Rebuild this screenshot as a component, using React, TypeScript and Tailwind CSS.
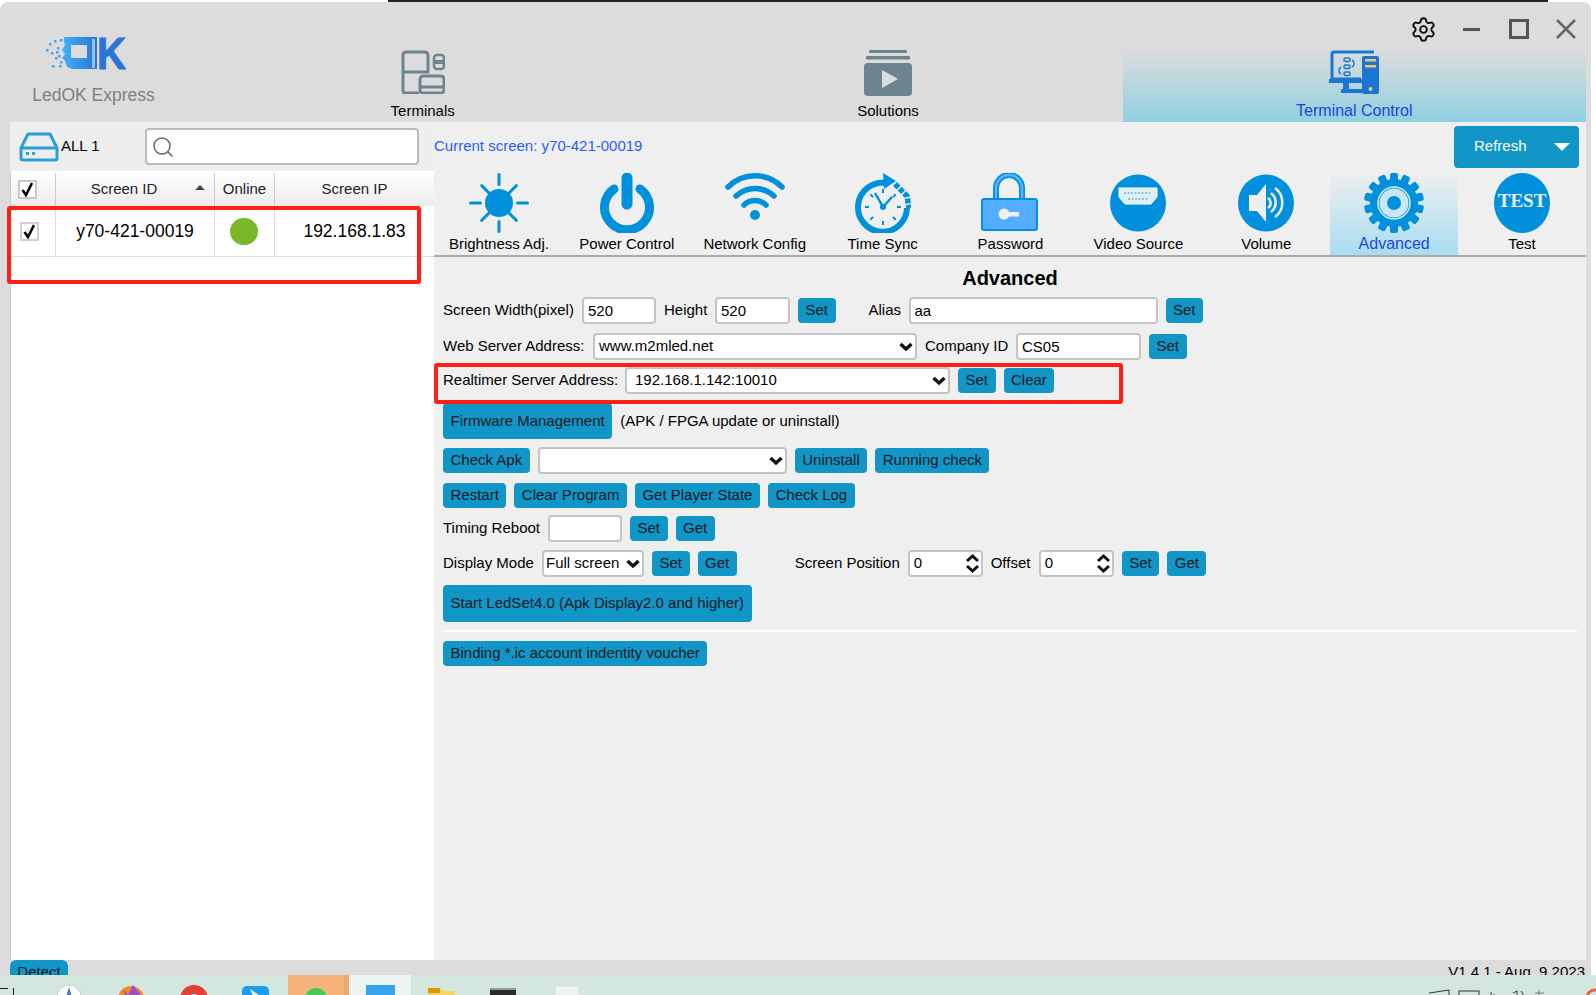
import { Search, Settings } from "lucide-react";
import type { ReactNode } from "react";

const ICON = "#0090dc";
const SLATE = "#6d8490";

function Btn({ children, tall }: { children: ReactNode; tall?: boolean }) {
  return (
    <button
      className={`shrink-0 whitespace-nowrap rounded-[4px] bg-[#1296c8] px-[7.5px] text-[15px] text-[#101820] ${
        tall ? "h-full" : "h-[25px]"
      }`}
    >
      {children}
    </button>
  );
}

function Field({ value, className }: { value: string; className: string }) {
  return (
    <input
      readOnly
      value={value}
      className={`h-[27px] shrink-0 rounded-[4px] border-2 border-[#c4c4c4] bg-white pl-[4px] text-[15px] text-black ${className}`}
    />
  );
}

function Picker({ value, className, inner }: { value: string; className: string; inner: string }) {
  return (
    <div className={`relative h-[27px] shrink-0 ${className}`}>
      <select
        defaultValue={value}
        className={`h-full w-full appearance-none rounded-[4px] border-2 border-[#c4c4c4] bg-white text-[15px] text-black ${inner}`}
      >
        <option value={value}>{value}</option>
      </select>
      <svg width="14" height="10" viewBox="0 0 14 10" fill="none" stroke="#111" strokeWidth="3.400" className="pointer-events-none absolute right-[4px] top-[9px]">
        <path d="M1.500 2l5.500 5 5.500-5" />
      </svg>
    </div>
  );
}

function Spinner() {
  return (
    <div className="flex h-[27px] w-[75px] shrink-0 items-center justify-between rounded-[4px] border-2 border-[#c4c4c4] bg-white pl-[4px] pr-[1px] text-[15px] text-black">
      <span>0</span>
      <svg width="15" height="21" viewBox="0 0 15 21" fill="none" stroke="#111" strokeWidth="3">
        <path d="M2 8l5.500-5 5.500 5M2 13l5.500 5 5.500-5" />
      </svg>
    </div>
  );
}

function Check({ className }: { className: string }) {
  return (
    <div className={`flex h-[19px] w-[19px] items-center justify-center border-2 border-[#c8c8c8] bg-white ${className}`}>
      <svg width="13" height="15" viewBox="0 0 13 15" fill="none" stroke="#000" strokeWidth="2.600">
        <path d="M1.500 8l3.500 5L11 1" />
      </svg>
    </div>
  );
}

function SunIcon() {
  const rays = [0, 45, 90, 135, 180, 225, 270, 315];
  return (
    <svg width="60" height="60" viewBox="0 0 60 60">
      <circle cx="30" cy="30" r="14" fill={ICON} />
      {rays.map((r) => (
        <rect key={r} x="28.500" y="0" width="3" height="13" rx="1.500" fill={ICON} transform={`rotate(${r} 30 30) ${r % 90 ? "translate(0 4)" : ""}`} />
      ))}
    </svg>
  );
}

function PowerIcon() {
  return (
    <svg width="56" height="60" viewBox="0 0 56 60" fill="none" stroke={ICON}>
      <path d="M15 16a22.500 22.500 0 1 0 26 0" strokeWidth="9" strokeLinecap="round" />
      <path d="M28 5v26" strokeWidth="11" strokeLinecap="round" />
    </svg>
  );
}

function WifiIcon() {
  return (
    <svg width="60" height="60" viewBox="0 4 60 60" fill="none" stroke={ICON} strokeWidth="5.500" strokeLinecap="round">
      <path d="M3 18c15-15 39-15 54 0" />
      <path d="M11 27c11-10 27-10 38 0" />
      <path d="M19 36c6-6 16-6 22 0" />
      <circle cx="30" cy="46" r="5" fill={ICON} stroke="none" />
    </svg>
  );
}

function ClockIcon() {
  const ticks = [0, 45, 90, 135, 180, 225, 270, 315];
  return (
    <svg width="56" height="60" viewBox="0 0 56 60" fill="none" stroke={ICON}>
      <path d="M31 10A24.500 24.500 0 1 0 52 35" strokeWidth="6" />
      <path d="M28 0l13 8-12 8z" fill={ICON} stroke="none" />
      <path d="M40 11l12 12 2 12" strokeWidth="5.500" strokeDasharray="5 1.500" />
      {ticks.map((t) => (
        <path key={t} d="M28 16v4" strokeWidth="2" transform={`rotate(${t} 28 34)`} />
      ))}
      <path d="M20 20l8 14 9-10" strokeWidth="2.500" />
      <circle cx="28" cy="34" r="3" fill={ICON} stroke="none" />
    </svg>
  );
}

function LockIcon() {
  return (
    <svg width="60" height="60" viewBox="0 0 60 60" fill="none">
      <path d="M16 28V15a13 13 0 0 1 26 0v13" stroke={ICON} strokeWidth="6" />
      <path d="M16 28V15a13 13 0 0 1 26 0v13" stroke="#5ab0ff" strokeWidth="2.500" />
      <rect x="2" y="26" width="55" height="31" rx="2" fill="#55adff" stroke={ICON} strokeWidth="2" />
      <circle cx="24" cy="41" r="5.500" fill="#eee" />
      <rect x="26" y="39" width="13" height="4.500" fill="#eee" />
    </svg>
  );
}

function HdmiIcon() {
  return (
    <svg width="58" height="60" viewBox="0 0 58 60">
      <ellipse cx="29" cy="30" rx="28" ry="28.500" fill={ICON} />
      <path d="M10 15h38v9l-6 7H16l-6-7z" fill="#dfeef6" stroke="#fff" strokeWidth="1" />
      <path d="M15 20h28M19 26h20" stroke="#6db5dd" strokeWidth="1.500" strokeDasharray="2 1.500" />
    </svg>
  );
}

function VolumeIcon() {
  return (
    <svg width="58" height="60" viewBox="0 0 58 60" fill="none">
      <ellipse cx="29" cy="30" rx="28" ry="28.500" fill={ICON} />
      <path d="M12 22h8l9-11v38l-9-11h-8z" fill="#eee" />
      <path d="M31 25a6 6 0 0 1 0 10M34 20a12 12 0 0 1 0 19M38 15a18 18 0 0 1 0 29" stroke="#eee" strokeWidth="2.500" />
    </svg>
  );
}

function GearIcon() {
  const teeth = Array.from({ length: 14 }, (_, i) => (i * 360) / 14);
  return (
    <svg width="60" height="62" viewBox="0 0 60 62">
      {teeth.map((t) => (
        <rect key={t} x="26" y="1" width="8" height="10" rx="2" fill={ICON} transform={`rotate(${t} 30 31)`} />
      ))}
      <circle cx="30" cy="31" r="24" fill={ICON} />
      <circle cx="30" cy="31" r="16" fill="none" stroke="#d8eef7" strokeWidth="1.500" />
      <circle cx="30" cy="31" r="14.500" fill="#c9e6f2" />
      <circle cx="30" cy="31" r="7" fill={ICON} />
    </svg>
  );
}

function TestIcon() {
  return (
    <div className="flex h-[60px] w-[56px] items-center justify-center rounded-[50%] bg-[#0090dc] pb-[3px] font-['Liberation_Serif'] text-[19px] font-bold text-[#eee]">
      TEST
    </div>
  );
}

const tools = [
  { label: "Brightness Adj.", icon: <SunIcon /> },
  { label: "Power Control", icon: <PowerIcon /> },
  { label: "Network Config", icon: <WifiIcon /> },
  { label: "Time Sync", icon: <ClockIcon /> },
  { label: "Password", icon: <LockIcon /> },
  { label: "Video Source", icon: <HdmiIcon /> },
  { label: "Volume", icon: <VolumeIcon /> },
  { label: "Advanced", icon: <GearIcon />, active: true },
  { label: "Test", icon: <TestIcon /> },
];

function Logo() {
  const dots = [
    [0, 12], [3, 6], [5, 15], [8, 3], [9, 20], [6, 28], [11, 10], [13, 28],
    [12, 18], [14, 2], [14, 24], [10, 14],
  ];
  return (
    <svg width="80" height="33" viewBox="0 0 80 33">
      <defs>
        <linearGradient id="logoFill" x1="0" x2="1" y1="0" y2="0">
          <stop offset="0" stopColor="#41b2f5" />
          <stop offset="1" stopColor="#2b74d6" />
        </linearGradient>
      </defs>
      {dots.map(([x, y]) => (
        <rect key={`${x}-${y}`} x={x} y={y} width="2.500" height="2.500" fill="#3ea9ee" />
      ))}
      <path fillRule="evenodd" d="M18 0h33v32H26l-5-2-2-6-3-3 3-4-3-4 3-5-1-4zM25 8v13h16V8z" fill="url(#logoFill)" />
      <rect x="46" y="2" width="3" height="29" fill="#8fc3ee" />
      <text x="51" y="32" textLength="29" lengthAdjust="spacingAndGlyphs" fontFamily="Liberation Sans" fontSize="44" fontWeight="700" fill="#2b74d6" stroke="#2b74d6" strokeWidth="1">
        K
      </text>
    </svg>
  );
}

function Taskbar() {
  return (
    <div className="flex h-[20px] shrink-0 overflow-hidden bg-[#d4e7df]">
      <svg width="288" height="20" viewBox="0 0 288 20" className="shrink-0">
        <path d="M0 13h8v1H0zM13 13h1v7h-1z" fill="#222" />
        <circle cx="69" cy="22" r="12" fill="#fff" stroke="#ccd" />
        <path d="M69 12l3 10h-6z" fill="#4a78b0" />
        <circle cx="131" cy="24" r="13" fill="#f58a1f" />
        <path d="M123 14l5 6 5-10 8 10-4 6h-10z" fill="#9a4fd0" />
        <circle cx="194" cy="24" r="14" fill="#e34133" />
        <circle cx="194" cy="24" r="5" fill="#fff" />
        <rect x="242" y="11" width="27" height="24" rx="5" fill="#1c9df0" />
        <path d="M250 14l10 7-6 2z" fill="#fff" />
      </svg>
      <div className="flex w-[56px] shrink-0 justify-center bg-[#f5b47c]">
        <div className="mt-[13px] h-[22px] w-[22px] rounded-full bg-[#44c95a]" />
      </div>
      <div className="w-[5px] shrink-0 bg-[#f0a870]" />
      <div className="flex w-[62px] shrink-0 justify-center bg-[#ecf4f1]">
        <div className="mt-[10px] h-[20px] w-[29px] bg-[#37a5ee]" />
      </div>
      <svg width="185" height="20" viewBox="0 0 185 20" className="shrink-0">
        <path d="M17 13h12l3 3h12v6H17z" fill="#fcd261" />
        <rect x="17" y="13" width="12" height="5" fill="#d99a00" />
        <rect x="79" y="13" width="26" height="12" fill="#2b2b2b" />
        <rect x="79" y="13" width="26" height="2" fill="#999" />
        <rect x="144" y="11" width="24" height="14" rx="2" fill="#eef2f0" stroke="#ddd" />
      </svg>
      <div className="flex-1" />
      <svg width="175" height="20" viewBox="0 0 175 20" className="shrink-0" fill="none" stroke="#333">
        <path d="M8 18l20-3v8" />
        <rect x="38" y="16" width="20" height="8" />
        <path d="M70 17v6M73 19v4" />
        <path d="M92 18l4-2v8M100 16a6 6 0 0 1 2 6" />
        <path d="M118 15v8M114 18h9" stroke="#777" />
        <path d="M166 22a8 8 0 0 1 9-7" stroke="#e8623a" strokeWidth="3" />
      </svg>
    </div>
  );
}

export default function App() {
  return (
    <div className="flex h-[995px] w-[1596px] flex-col overflow-hidden bg-white font-['Liberation_Sans',Arial,sans-serif] text-[15px] text-black">
      <div className="flex h-[2px] shrink-0">
        <div className="w-[388px] shrink-0" />
        <div className="flex-1 bg-[#222]" />
        <div className="w-[48px] shrink-0" />
      </div>
      <div className="mr-[5px] flex min-h-0 flex-1 flex-col overflow-hidden rounded-t-[8px] bg-[#dcdcdc]">
        <header className="flex h-[120px] shrink-0">
          <div className="flex w-[188px] shrink-0 flex-col items-center pt-[35px]">
            <div className="ml-[-17px]">
              <Logo />
            </div>
            <div className="mt-[14px] ml-[-1px] text-[17.500px] leading-[22px] text-[#808080]">LedOK Express</div>
          </div>
          <div className="flex min-w-0 flex-1 flex-col">
            <div className="flex h-[46px] shrink-0 items-start justify-end pr-[15px] pt-[15px]">
              <Settings size={27} strokeWidth={1.700} color="#111" className="mr-[26px] -mt-[1px]" />
              <div className="mt-[11px] mr-[29px] h-[3px] w-[17px] bg-[#555]" />
              <div className="mt-[2px] mr-[27px] h-[20px] w-[20px] border-[3px] border-[#555]" />
              <svg width="20" height="20" viewBox="0 0 20 20" stroke="#666" strokeWidth="2.500" className="mt-[2px]">
                <path d="M1 1l18 18M19 1L1 19" />
              </svg>
            </div>
            <div className="ml-[2px] mr-[5px] grid h-[74px] grid-cols-3">
              <div className="flex flex-col items-center">
                <svg width="44" height="44" viewBox="0 0 44 44" fill="none" stroke={SLATE} strokeWidth="3" className="mt-[2px]">
                  <path d="M2 22V5a3 3 0 0 1 3-3h19a3 3 0 0 1 3 3v17H2v19a2 2 0 0 0 2 2h14" strokeLinejoin="round" />
                  <rect x="33" y="5" width="10" height="14" rx="3" strokeWidth="2.500" />
                  <rect x="33" y="10" width="10" height="4" rx="1" fill={SLATE} stroke="none" />
                  <rect x="19" y="26" width="24" height="17" rx="3" />
                  <path d="M20 37h22" />
                </svg>
                <div className="mt-[7px] text-[15px] leading-[20px]">Terminals</div>
              </div>
              <div className="flex flex-col items-center">
                <svg width="48" height="46" viewBox="0 0 48 46" className="mt-[2px] shrink-0">
                  <rect x="5" y="0" width="38" height="3" rx="1" fill={SLATE} />
                  <rect x="2" y="6" width="44" height="3.500" rx="1" fill={SLATE} />
                  <rect x="0" y="13" width="48" height="33" rx="4" fill={SLATE} />
                  <path d="M18 20l16 9-16 9z" fill="#dcdcdc" />
                </svg>
                <div className="mt-[5px] text-[15px] leading-[20px]">Solutions</div>
              </div>
              <div className="ml-[2px] flex flex-col items-center bg-gradient-to-b from-[#dcdcdc] to-[#8fcfe0]">
                <svg width="50" height="44" viewBox="0 0 50 44" className="mt-[2px] shrink-0">
                  <path d="M32 29H3V4a2 2 0 0 1 2-2h40" fill="none" stroke="#1976d2" strokeWidth="3" />
                  <rect x="0" y="29" width="33" height="4" fill="#1976d2" />
                  <rect x="14" y="33" width="6" height="7" fill="#1976d2" />
                  <rect x="12" y="39" width="22" height="4" rx="1" fill="#1976d2" />
                  <rect x="33" y="6" width="17" height="38" rx="2" fill="#1976d2" />
                  <rect x="36" y="9" width="11" height="2.500" fill="#f6c36a" />
                  <rect x="36" y="15" width="11" height="2.500" fill="#f6c36a" />
                  <circle cx="41.500" cy="39" r="2" fill="#f6c36a" />
                  <g fill="none" stroke="#1976d2" strokeWidth="1.500">
                    <rect x="15" y="8" width="6" height="3.500" rx="1.500" />
                    <rect x="15" y="15" width="6" height="3.500" rx="1.500" />
                    <rect x="15" y="22" width="6" height="3.500" rx="1.500" />
                    <path d="M23 10a4 4 0 0 1 0 7M12 17a4 4 0 0 0 0 7" />
                  </g>
                </svg>
                <div className="mt-[7px] text-[16px] leading-[20px] text-[#1a45e0]">Terminal Control</div>
              </div>
            </div>
          </div>
        </header>

        <main className="ml-[10px] mr-[5px] flex h-[838px] shrink-0">
          <aside className="relative flex w-[424px] shrink-0 flex-col">
            <div className="flex h-[49px] shrink-0 items-center bg-[#eee]">
              <svg width="40" height="30" viewBox="0 0 40 30" fill="none" stroke="#2a9fd6" strokeWidth="3" className="ml-[9px]">
                <path d="M2 16L9 2h22l7 14v10a2 2 0 0 1-2 2H4a2 2 0 0 1-2-2z" strokeLinejoin="round" />
                <path d="M2 16h36" />
                <rect x="7" y="20" width="3" height="3" fill="#2a9fd6" stroke="none" />
                <rect x="13" y="20" width="3" height="3" fill="#2a9fd6" stroke="none" />
              </svg>
              <span className="ml-[2px] text-[15px]">ALL 1</span>
              <div className="ml-[45px] flex h-[37px] w-[274px] items-center rounded-[4px] border-2 border-[#bbb] bg-white pl-[4px]">
                <Search size={24} strokeWidth={1.500} color="#666" />
              </div>
            </div>
            <div className="flex h-[35px] shrink-0 border-l border-[#ccc] bg-gradient-to-b from-white to-[#ececec] pt-[2px] text-[15px] text-[#222]">
              <div className="flex w-[45px] items-center justify-start border-r border-[#ccc] pl-[7px]">
                <Check className="" />
              </div>
              <div className="relative flex w-[159px] items-center justify-center border-r border-[#ccc] pr-[22px]">
                Screen ID
                <span className="absolute right-[9px] top-[12px] h-0 w-0 border-x-[5px] border-b-[5px] border-x-transparent border-b-[#444]" />
              </div>
              <div className="flex w-[60px] items-center justify-center border-r border-[#ccc]">Online</div>
              <div className="flex flex-1 items-center justify-center">Screen IP</div>
            </div>
            <div className="flex min-h-0 flex-1 flex-col border-l border-[#ccc] bg-white">
              <div className="flex h-[51px] shrink-0 border-b border-[#ddd] text-[17.500px]">
                <div className="flex w-[45px] items-center border-r border-[#ddd] pl-[9px]">
                  <Check className="border-[#d0d0d0]" />
                </div>
                <div className="flex w-[159px] items-center justify-center border-r border-[#ddd]">y70-421-00019</div>
                <div className="flex w-[60px] items-center justify-center border-r border-[#ddd]">
                  <div className="ml-[-2px] h-[27px] w-[28px] rounded-full bg-[#7ab829]" />
                </div>
                <div className="flex flex-1 items-center justify-center">192.168.1.83</div>
              </div>
            </div>
            <div className="absolute left-[-3px] top-[84px] h-[78px] w-[414px] rounded-[3px] border-[4px] border-[#ff2015]" />
          </aside>

          <section className="relative flex min-w-0 flex-1 flex-col bg-[#efefef]">
            <div className="flex h-[49px] shrink-0 items-center justify-between pr-[7px]">
              <span className="text-[15px] text-[#2a5cff]">Current screen: y70-421-00019</span>
              <div className="flex h-[42px] w-[125px] items-center rounded-[4px] bg-[#1296c8] text-[15px] text-white">
                <span className="ml-[20px] flex-1">Refresh</span>
                <span className="mr-[9px] h-0 w-0 border-x-[8px] border-t-[8px] border-x-transparent border-t-white" />
              </div>
            </div>
            <div className="grid h-[86px] shrink-0 grid-cols-9 border-b-2 border-[#aaa] pl-[1px]">
              {tools.map((tool) => (
                <div
                  key={tool.label}
                  className={`flex flex-col items-center overflow-hidden pt-[1px] ${
                    tool.active ? "bg-gradient-to-b from-[#efefef] to-[#a9dcf0] text-[#1a45e0]" : ""
                  }`}
                >
                  <div className="flex h-[62px] items-center justify-center">{tool.icon}</div>
                  <div className={`mt-[1px] whitespace-nowrap leading-[18px] ${tool.active ? "text-[16px]" : "text-[15px]"}`}>{tool.label}</div>
                </div>
              ))}
            </div>

            <h2 className="flex h-[40px] shrink-0 items-center justify-center pt-[2px] text-[20px] font-bold leading-none">Advanced</h2>

            <div className="flex flex-col whitespace-nowrap pl-[9px] pr-[9px]">
              <div className="flex h-[27px] items-center">
                <span className="w-[139px] shrink-0">Screen Width(pixel)</span>
                <Field value="520" className="w-[74px]" />
                <span className="ml-[8px] w-[51px] shrink-0">Height</span>
                <Field value="520" className="w-[75px]" />
                <div className="ml-[8px]"><Btn>Set</Btn></div>
                <span className="ml-[33px] w-[40px] shrink-0">Alias</span>
                <Field value="aa" className="w-[249px]" />
                <div className="ml-[8px]"><Btn>Set</Btn></div>
              </div>
              <div className="mt-[9px] flex h-[27px] items-center">
                <span className="w-[150px] shrink-0">Web Server Address:</span>
                <Picker value="www.m2mled.net" className="w-[324px]" inner="pl-[4px]" />
                <span className="ml-[8px] w-[91px] shrink-0">Company ID</span>
                <Field value="CS05" className="w-[125px]" />
                <div className="ml-[8px]"><Btn>Set</Btn></div>
              </div>
              <div className="mt-[7px] flex h-[27px] items-center">
                <span className="w-[182px] shrink-0">Realtimer Server Address:</span>
                <Picker value="192.168.1.142:10010" className="w-[325px]" inner="pl-[8px]" />
                <div className="ml-[8px] flex gap-[8px]">
                  <Btn>Set</Btn>
                  <Btn>Clear</Btn>
                </div>
              </div>
              <div className="mt-[9px] flex h-[36px] items-center gap-[8px]">
                <Btn tall>Firmware Management</Btn>
                <span>(APK / FPGA update or uninstall)</span>
              </div>
              <div className="mt-[8px] flex h-[27px] items-center gap-[8px]">
                <Btn>Check Apk</Btn>
                <Picker value="" className="w-[249px]" inner="pl-[4px]" />
                <Btn>Uninstall</Btn>
                <Btn>Running check</Btn>
              </div>
              <div className="mt-[9px] flex h-[25px] items-center gap-[8px]">
                <Btn>Restart</Btn>
                <Btn>Clear Program</Btn>
                <Btn>Get Player State</Btn>
                <Btn>Check Log</Btn>
              </div>
              <div className="mt-[7px] flex h-[27px] items-center gap-[8px]">
                <span className="w-[97px] shrink-0">Timing Reboot</span>
                <Field value="" className="w-[74px]" />
                <Btn>Set</Btn>
                <Btn>Get</Btn>
              </div>
              <div className="mt-[8px] flex h-[27px] items-center gap-[8px]">
                <span className="w-[91px] shrink-0">Display Mode</span>
                <Picker value="Full screen" className="w-[102px]" inner="pl-[2px]" />
                <Btn>Set</Btn>
                <Btn>Get</Btn>
                <span className="ml-[50px] w-[105px] shrink-0">Screen Position</span>
                <Spinner />
                <span className="w-[40px] shrink-0">Offset</span>
                <Spinner />
                <Btn>Set</Btn>
                <Btn>Get</Btn>
              </div>
              <div className="mt-[8px] flex h-[37px] items-center">
                <Btn tall>Start LedSet4.0 (Apk Display2.0 and higher)</Btn>
              </div>
              <div className="mt-[8px] h-[2px] bg-white" />
              <div className="mt-[9px] flex h-[25px] items-center">
                <Btn>Binding *.ic account indentity voucher</Btn>
              </div>
            </div>
            <div className="absolute left-0 top-[241px] h-[41px] w-[689px] rounded-[3px] border-[4px] border-[#ff2015]" />
          </section>
        </main>

        <footer className="flex min-h-0 flex-1 items-start justify-between overflow-hidden pl-[10px] pr-[6px]">
          <button className="h-[24px] w-[58px] shrink-0 rounded-t-[6px] bg-[#1296c8] text-[15px] text-[#101820]">Detect</button>
          <span className="mt-[2px] text-[15px] leading-[20px]">V1.4.1 - Aug. 9 2023</span>
        </footer>
      </div>
      <Taskbar />
    </div>
  );
}
